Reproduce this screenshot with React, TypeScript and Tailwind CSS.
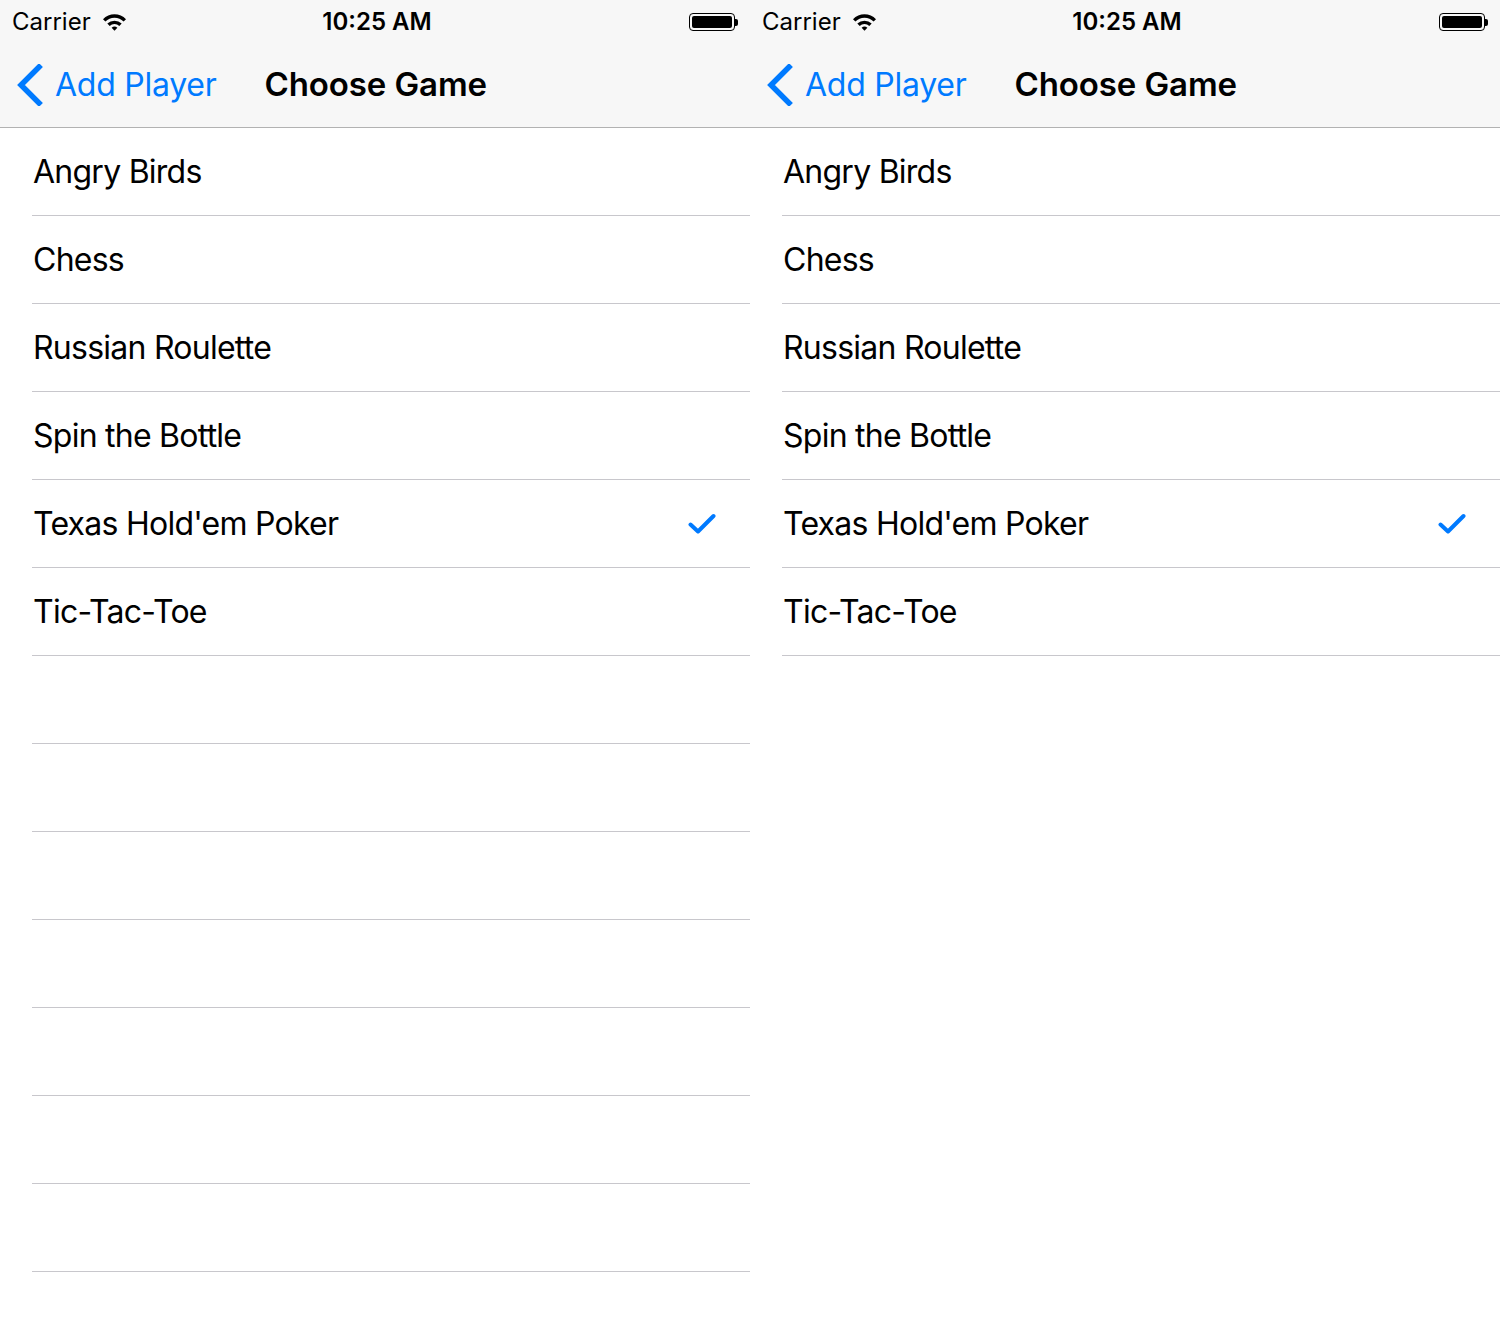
import React from 'react';

const games = ['Angry Birds', 'Chess', 'Russian Roulette', 'Spin the Bottle', "Texas Hold'em Poker", 'Tic-Tac-Toe'];

const Wifi = () => (
  <svg width="25" height="18" viewBox="0 0 25 18" className="ml-[11px]">
    <path d="M1 6.2 A16 16 0 0 1 24 6.2 L21.6 8.6 A12.6 12.6 0 0 0 3.4 8.6 Z" fill="#000" />
    <path d="M5.3 10.5 A10.5 10.5 0 0 1 19.7 10.5 L17.3 12.9 A7.1 7.1 0 0 0 7.7 12.9 Z" fill="#000" />
    <path d="M9.6 14.8 A4.6 4.6 0 0 1 15.4 14.8 L12.5 17.7 Z" fill="#000" />
  </svg>
);

const Battery = () => (
  <div className="flex items-center">
    <div className="w-[46px] h-[18px] rounded-[4px] border border-black p-[2px]">
      <div className="w-full h-full bg-black rounded-[2px]" />
    </div>
    <div className="w-[3px] h-[7px] bg-black rounded-r-[2px]" />
  </div>
);

const Phone = ({ emptyRows }: { emptyRows: number }) => (
  <div className="w-[750px] h-[1334px] bg-white flex flex-col">
    <div className="bg-[#f7f7f7] h-[128px] border-b border-[#b2b2b2] flex flex-col">
      <div className="h-[42px] pt-[2px] flex items-center justify-between pl-[12px] pr-[12px] relative">
        <div className="flex items-center text-[24px] text-black">
          <span>Carrier</span>
          <Wifi />
        </div>
        <div className="absolute left-0 right-0 text-center text-[24px] font-semibold text-black pointer-events-none pl-[4px]">10:25 AM</div>
        <Battery />
      </div>
      <div className="h-[85px] flex items-center">
        <div className="flex items-center text-[#007aff] pl-[16px]">
          <svg width="27" height="42" viewBox="0 0 27 42">
            <path d="M23 3 L5 21 L23 39" fill="none" stroke="#007aff" strokeWidth="5.5" strokeLinecap="square" />
          </svg>
          <span className="ml-[12px] text-[32px] tracking-[-0.25px]">Add Player</span>
        </div>
        <div className="ml-[48px] text-[33px] font-semibold text-black tracking-[-0.1px]">Choose Game</div>
      </div>
    </div>
    <div className="pl-[32px]">
      {games.map(g => (
        <div key={g} className="h-[88px] border-b border-[#c8c7cc] flex items-center justify-between pr-[34px]">
          <span className="text-[32px] text-black pl-[1px] tracking-[-0.75px]">{g}</span>
          {g === "Texas Hold'em Poker" && (
            <svg width="28" height="22" viewBox="0 0 28 22">
              <path d="M2.5 11.5 L10 18.5 L25.5 3" fill="none" stroke="#007aff" strokeWidth="4" strokeLinecap="round" strokeLinejoin="round" />
            </svg>
          )}
        </div>
      ))}
      {Array.from({ length: emptyRows }).map((_, i) => (
        <div key={i} className="h-[88px] border-b border-[#c8c7cc]" />
      ))}
    </div>
  </div>
);

export default function App() {
  return (
    <div className="w-[1511px] h-[1334px] bg-white flex overflow-hidden" style={{ fontFamily: "Inter, 'Liberation Sans', sans-serif" }}>
      <Phone emptyRows={7} />
      <Phone emptyRows={0} />
    </div>
  );
}
